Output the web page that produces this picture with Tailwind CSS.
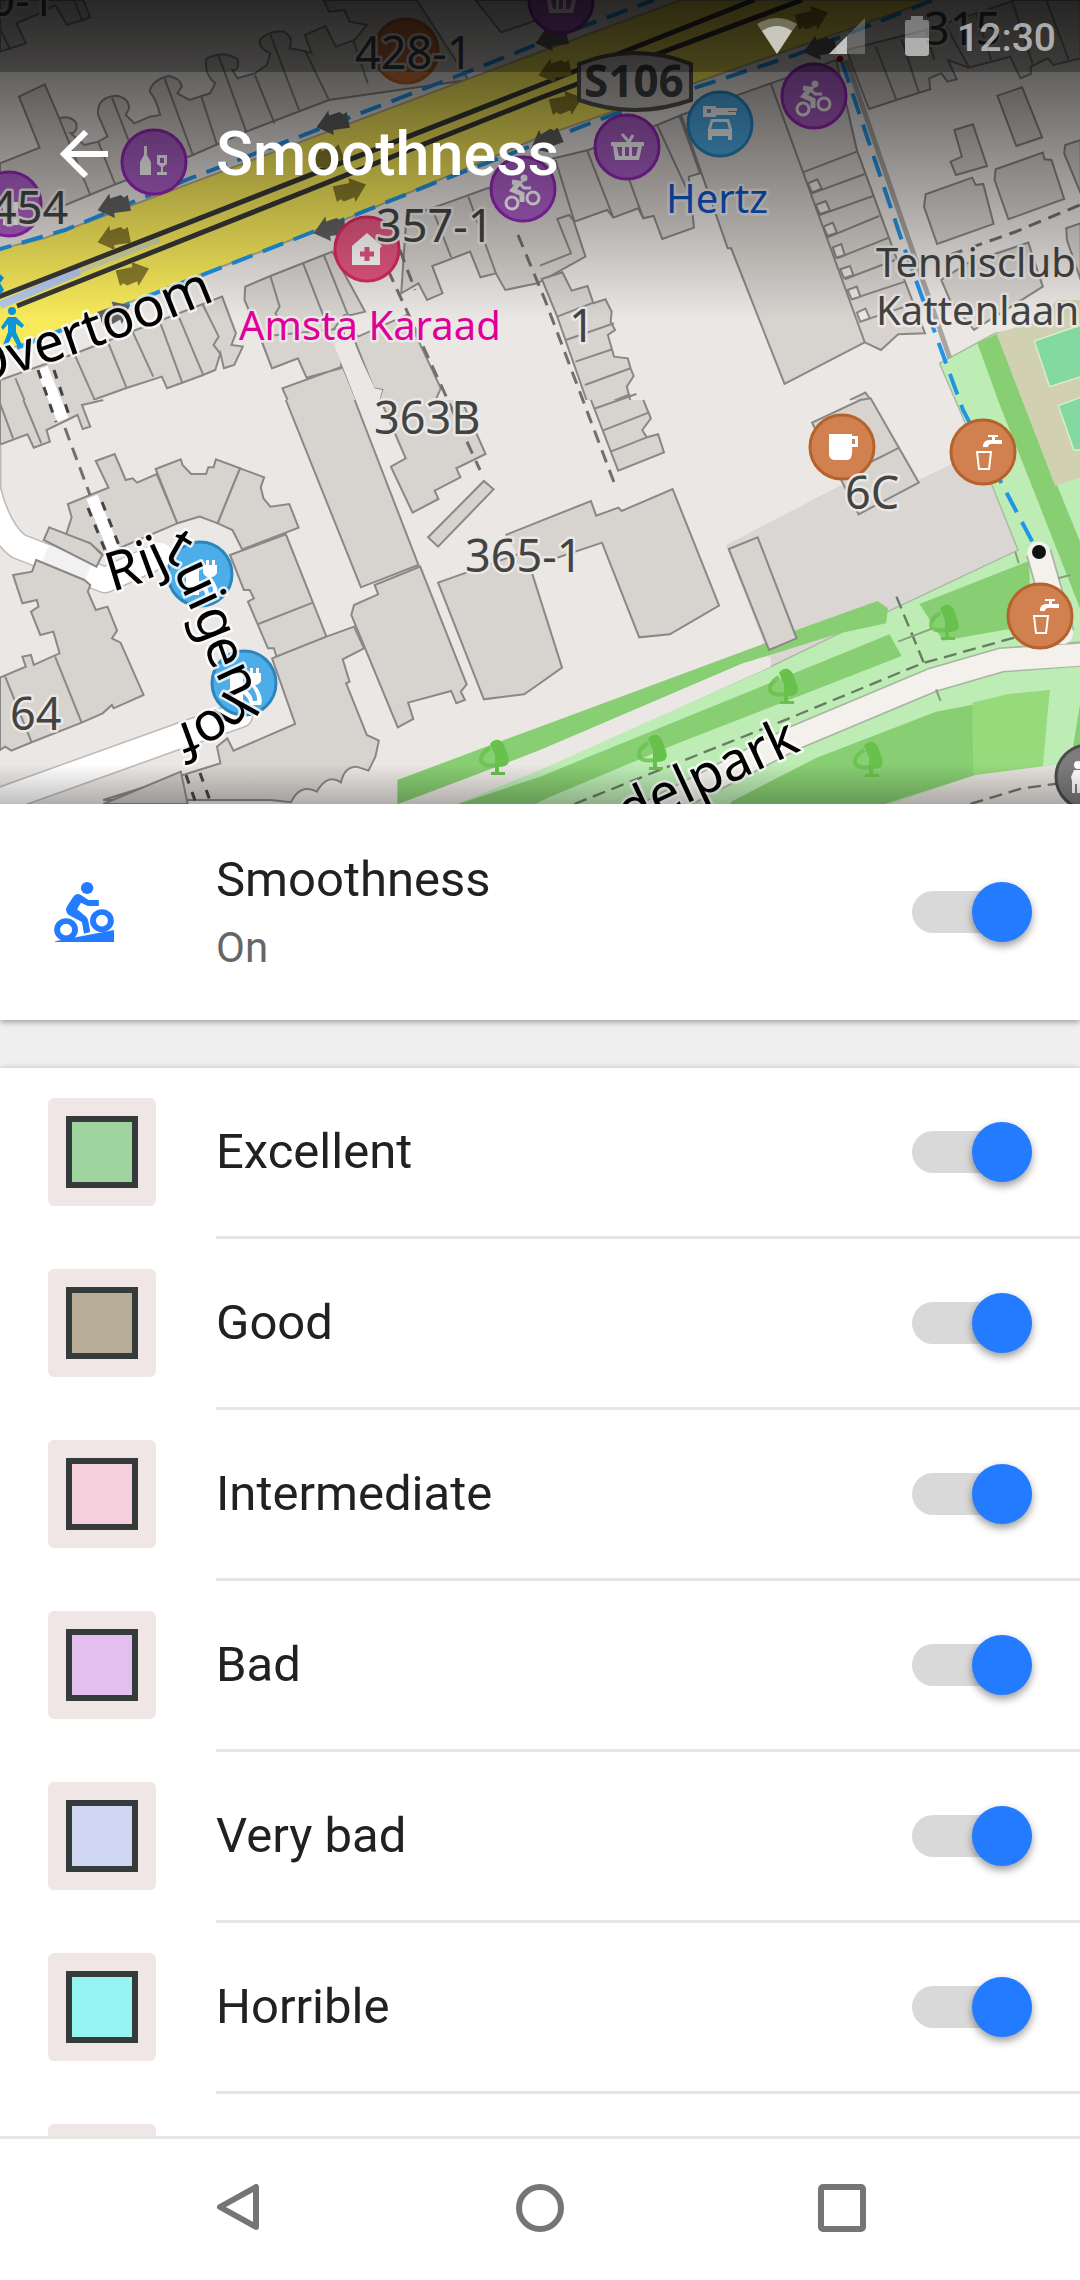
<!DOCTYPE html>
<html lang="en">
<head>
<meta charset="utf-8">
<meta name="viewport" content="width=device-width, initial-scale=1">
<title>Smoothness</title>
<script src="https://cdn.jsdelivr.net/npm/@tailwindcss/browser@4"></script>
</head>
<body class="flex h-screen flex-col overflow-hidden bg-white font-['Roboto',sans-serif] text-[#212121]">

<header class="relative h-[804px] shrink-0 overflow-hidden bg-[#ebe7e4]">
<svg class="absolute inset-0 size-full font-['Noto_Sans',sans-serif]" viewBox="0 0 1080 804" preserveAspectRatio="xMidYMin slice" role="img" aria-label="Map">
<defs>
  <path id="arrow" d="M-17 3L-3 -12V-7L8 -9L11 -6L15 -8L16 8L-1 8V13Z"/>
  <g id="bike" fill="none" stroke="#fff" stroke-width="3"><circle cx="-10" cy="11" r="6"/><circle cx="11" cy="6" r="6"/><path d="M-10 -10L-3 -9L-9 -2L0 2V10" stroke-width="5"/><path d="M-3 -9L2 -4H9"/><circle cx="2" cy="-14" r="2" fill="#fff"/></g>
  <g id="basket"><path d="M-16 -5H17V-1H15L12 13H-12L-14 -1H-16Z" fill="#fff"/><path d="M-10 0L-8 9H-5V0ZM-2 0V9H2V0ZM5 0V9H9L11 0Z" fill="#ac5fc8"/><path d="M-5 -13L2 -5L6 -12" fill="none" stroke="#fff" stroke-width="3"/></g>
  <g id="tap"><path d="M-1 -7Q0 -12 6 -12H8V-15H4V-17H14V-15H11V-12H18V-8H12Q4 -9 4 -5H-1Z" fill="#fff"/><path d="M-7 0H7L5 17H-5Z" fill="none" stroke="#fff" stroke-width="2"/></g>
  <g id="tree"><path fill="#67c14c" d="M-4 -13Q0 -18 5 -17Q11 -14 12 -6Q17 4 13 8Q10 10 5 10V15H11V18H-3V15H1V-2Z"/><path d="M-4 -9Q-14 -3 -13 4Q-10 10 2 8" fill="none" stroke="#67c14c" stroke-width="4" opacity=".8"/></g>
  <g id="plug"><path d="M3 -13H6V-18H9V-13H12V-18H15V-13H17V-5Q15 -1 11 -1Q20 10 17 19H6Q4 10 -1 8V17H-14V-12H-1V3Q7 5 9 15H13Q14 8 7 -1Q3 -3 3 -7Z" fill="#fff"/></g>
</defs>

<!-- parks -->
<g transform="translate(540 400) scale(.3444 .3333)">
  <path fill="#dad6d3" d="M540 435L870 258L1100 240L1200 190L1310 250L1388 450L1010 635L670 800L650 730Z"/>
  <path fill="#bdecb5" stroke="#a9b8a2" stroke-width="4" d="M-60 1130L670 800L880 695L1010 635L1388 450L1310 250L1160 -110L1320 -200L1570 -240V900L1568 1220H-420Z"/>
  <path fill="#88ce72" d="M-414 1220V1140L0 980L640 735L745 690L980 603L1010 625L1005 670L870 700L590 790L0 1050L-410 1215Z"/>
  <path fill="#ebe7e4" d="M-414 1213L0 1052L590 790L670 770V800L0 1110L-260 1220H-414Z"/>
  <path fill="#88ce72" d="M-260 1220L0 1130L1015 703L1050 768L400 1030L30 1190L-30 1220ZM1102 612L1420 483L1425 640L1400 680L1170 722ZM555 1205L800 1075L1150 935L1480 870L1455 1103L1265 1125L1000 1212H555ZM1270 -170L1330 -200L1400 0L1568 430V620L1330 0Z"/>
  <path fill="#96da7c" d="M1255 908L1360 882L1480 870L1460 1100L1258 1125Z"/>
  <path fill="#88ce72" d="M1540 1090L1570 900V1090Z"/>
  <path fill="#88ce72" d="M1330 0L1400 0L1570 430V630Z"/>
  <path fill="#d1d1b2" d="M1325 -200L1450 -240L1500 -300H1570V232L1496 258Z"/>
  <path fill="#84d9a0" stroke="#d8f0d0" stroke-width="4" d="M1435 -177L1570 -225V-70L1480 -40ZM1505 17L1570 -8V150L1550 150Z"/>
  <path fill="#e6e2de" d="M1010 1215L1265 1125L1570 1085V1220Z"/>
  <path fill="none" stroke="#a8b5a3" stroke-width="76" d="M240 1280L735 1015L1140 840L1340 780L1570 762M1448 458L1515 700"/>
  <path fill="none" stroke="#f4f1ec" stroke-width="66" stroke-linecap="round" d="M240 1280L735 1015L1140 840L1340 780L1600 762M1448 458L1515 700"/>
  <path fill="none" stroke="#6b7a66" stroke-width="7" stroke-dasharray="38 20" d="M100 1212L700 965L1110 790L1370 715L1420 705M1035 590L1115 790M1250 1212L1400 1165L1510 1150"/>
  <path fill="none" stroke="#87a17e" stroke-width="6" d="M1040 725L1140 685M1380 455L1390 490M1150 868L1163 903M1505 535L1540 525"/>
</g>
<use href="#tree" x="944" y="622"/><use href="#tree" x="783" y="686"/><use href="#tree" x="652" y="752"/><use href="#tree" x="868" y="759"/><use href="#tree" x="494" y="757"/>

<!-- side streets -->
<g fill="none" stroke-linecap="round" stroke-linejoin="round">
  <path stroke="#bdb9b6" stroke-width="27" d="M-12 445V490Q-2 530 18 546L105 580L150 560M-10 804L182 735L240 715"/>
  <path stroke="#fff" stroke-width="24" d="M-12 445V490Q-2 530 18 546L105 580L160 555M-10 804L182 735L240 715"/>
  <path stroke="#f1f1f1" stroke-width="22" stroke-linecap="butt" d="M45 555L88 573"/>
</g>

<!-- buildings, north west -->
<g class="*:[vector-effect:non-scaling-stroke]" transform="scale(.3444 .3333)" fill="#d7d3cf" stroke="#8a8886" stroke-width="2">
  <path d="M0 155L75 130L48 70L105 45L160 15L195 75L262 52L242 0H0ZM215 0L240 65M0 85L30 150"/>
  <path d="M0 490L115 443L55 290L130 253L172 355Q205 345 222 370Q225 400 205 400L245 435L285 425L312 410L285 345Q280 290 340 287Q375 295 375 325L365 345L390 370L435 350L465 345Q455 300 435 275Q440 240 490 228Q525 235 528 260L515 280L550 300L610 280L625 250Q590 220 600 175Q650 150 690 178Q695 215 675 210L690 235L740 220L775 195L785 160Q750 145 755 120Q780 90 825 95Q855 115 840 145L870 150L905 160L885 105L945 78L975 140L1030 120L1065 75L1015 65L1000 30L955 35L940 0H1210L1360 240L955 300L715 395L560 465L330 555L190 615L0 690Z"/>
  <path fill="none" d="M172 355L262 585M285 425L335 555M325 292L410 520M478 235L560 465M585 290L630 435M635 168L715 395M740 225L797 370M785 105L870 335M885 150L955 300M1025 120L1068 250"/>
  <path d="M1380 0L1455 97L1560 60V0Z"/>
  <path d="M0 1200V1140L220 1060L645 890L685 1000L672 1035L705 1040L680 1095L650 1105L640 1060L625 1110L590 1125L525 1150L485 1165L470 1130L365 1165L270 1200"/>
  <path fill="none" d="M45 1135L75 1210M130 1100L160 1200M217 1065L275 1200M315 1030L368 1165M385 995L445 1130M462 960L530 1150M515 940L590 1125M588 912L635 1010L620 1035L640 1062"/>
  <path d="M712 860L785 828L940 765L965 755L1060 935L1020 945L1000 945L905 1075L870 1073L790 1105L755 1010L710 900Z"/>
  <path fill="none" d="M785 828L812 920L800 940L870 1075M880 790L940 950M940 765L1010 945"/>
  <path d="M755 1010L1000 985L990 1105L890 1133L865 1075L790 1105ZM1100 1200L1110 1170L1085 1165L1010 970L1040 1010L1180 945L1280 1165L1265 1200M835 1200L820 1165L995 1100L1035 1200"/>
  <path fill="#ebe7e4" d="M968 1030L1018 1010L1088 1165L1110 1170L1100 1205H1035L995 1100Z" stroke="none"/>
  <path d="M1180 650L1300 608L1415 565L1630 550L1700 770L1560 850L1467 870L1440 820L1395 832L1365 755L1255 798L1285 880L1240 900L1215 850L1165 880Z"/>
  <path fill="none" d="M1262 645L1310 772M1360 590L1440 820"/>
</g>

<!-- buildings, north east -->
<g class="*:[vector-effect:non-scaling-stroke]" transform="translate(540 0) scale(.3444 .3333)" fill="#d7d3cf" stroke="#8a8886" stroke-width="2">
  <path d="M-40 495L140 450L340 375L410 345L465 520L432 530L447 683L355 717L330 648L300 655L285 625L213 653L195 630L100 665L85 645L50 657L90 760L0 797"/>
  <path fill="none" d="M45 480L100 665M137 452L213 653M242 490L300 655M340 375L432 580M405 348L465 520"/>
  <path d="M410 345L670 250L860 180L920 450L1060 845L1118 1000L1040 1003L990 1050L943 1027L710 1152L555 745L545 745Z"/>
  <path fill="none" d="M670 250L943 1027M763 517L920 455M790 580L943 522M812 645L967 588M835 712L985 648M862 775L1013 713M885 838L1030 780M905 898L1060 845M930 965L1060 920"/>
  <path fill="#ebe7e4" d="M778 550L805 538L818 565L790 578ZM800 615L830 603L842 632L813 642ZM823 680L850 668L862 698L835 708ZM850 742L875 732L885 765L860 773ZM872 808L900 798L910 825L883 835ZM893 870L920 860L930 890L905 898ZM920 938L945 926L958 955L930 965Z"/>
  <path d="M890 150L1120 90L1265 40L1380 0H1570V175L1490 195L1475 175L1425 200V222L1395 235L1365 170L1245 203L1185 180L1210 238L1183 245L1165 220L1130 235L1133 268L1035 300L955 327Z"/>
  <path fill="none" d="M975 140L1035 300M1050 118L1100 278M1120 90L1145 180M1180 80L1245 200M1265 35L1310 180M1370 0L1430 190M1470 0L1535 180"/>
  <path d="M1328 287L1400 262L1458 412L1383 438ZM1203 390L1257 373L1298 498L1208 525L1192 485L1225 470ZM1120 583L1255 533L1265 555L1287 552L1317 672L1153 732L1115 620ZM1323 508L1460 458L1465 478L1485 480L1522 597L1360 658L1320 540ZM1570 420L1525 435L1522 460L1570 580ZM1570 670L1528 685L1530 720L1570 840ZM1165 840L1190 900L1260 990L1460 860L1418 728L1240 790Z"/>
  <path d="M135 1200L50 950L5 837L65 817L92 872L138 858L155 910L190 898L208 935L205 965L218 990L197 1005L215 1070L255 1075L263 1105L272 1128L252 1160L262 1200"/>
  <path fill="none" d="M50 950L155 908M75 1020L215 970M103 1085L210 1048M130 1155L263 1105M185 1215L262 1183"/>
  <path d="M900 1200L945 1178L960 1200"/>
  <path fill="none" stroke="#aaa5a2" stroke-width="5" d="M890 180L1190 1075"/>
</g>

<!-- buildings, south west -->
<g class="*:[vector-effect:non-scaling-stroke]" transform="translate(0 400) scale(.3444 .3333)" fill="#d7d3cf" stroke="#8a8886" stroke-width="2">
  <path d="M300 0L238 15L262 80L240 87L225 45L135 90L145 125L98 143L80 103L5 132L0 130V0"/>
  <path fill="none" d="M0 10L38 115M68 0L120 130"/>
  <path d="M278 183L333 162L365 240L385 235L398 248L455 222L515 370L440 403L300 465L262 430L192 403L208 352L197 312L262 285L315 263Z"/>
  <path d="M452 207L525 178L530 195L555 222H598L605 202H620L627 178L697 205L632 370L580 350L515 370Z"/>
  <path d="M697 205L767 232L757 262L765 295L785 320L840 312L867 383L703 448L675 390L632 370Z"/>
  <path d="M143 382L262 430L297 465L280 500L127 420ZM105 480L245 540L262 555L255 575L278 630L312 620L340 692L325 715L350 728L417 885L330 925L325 915L298 940L237 968L92 1027L33 1052L15 1040L0 1050V833L75 800L65 770L90 765L98 795L173 760L155 695L117 705L90 635L112 620L107 600L65 610L38 525L93 515Z"/>
  <path fill="none" d="M160 770L237 968M15 830L92 1027"/>
  <path d="M668 465L830 403L948 710L803 770L795 745H778L720 605L737 595L725 570H708ZM750 672L908 608"/>
  <path d="M790 775L948 710L1028 680L1057 745L995 778L1015 845L1005 850L1065 1005L1100 1022L1090 1070L1070 1112L1035 1100Q1000 1100 990 1147Q950 1120 920 1175Q870 1150 845 1207L785 1200H300L640 1090L630 1040L660 1015L678 1052L857 972Z"/>
  <path d="M830 0L1048 562L1215 495L1030 0M1088 555L1220 500L1355 853L1338 875L1350 900L1325 910L1310 873L1185 908L1200 957L1155 982L1020 645L1028 615L1098 583Z"/>
  <path d="M1105 0L1178 175L1135 200L1198 338L1273 297L1262 272L1337 232L1325 205L1410 162L1340 0M1243 412L1405 243L1433 268L1272 440ZM1272 548L1525 455L1632 803L1568 850L1522 883L1405 898Z"/>
  <path fill="#cfcbc8" d="M300 1212L525 1115L545 1212Z"/>
</g>

<!-- buildings, south east -->
<g class="*:[vector-effect:non-scaling-stroke]" transform="translate(540 400) scale(.3444 .3333)" fill="#d7d3cf" stroke="#8a8886" stroke-width="2">
  <path d="M-100 405L148 303L163 347L228 323L237 333L385 267L520 617L377 703L288 712L180 428L-40 505"/>
  <path d="M148 0L227 212L360 157L343 103L310 112L297 90L322 55L300 0M155 27L280 -18M182 92L315 38M205 155L310 112M548 447L632 412L745 715L665 750Z"/>
  <path d="M790 68L930 0L960 -5L1100 248L925 343ZM885 225L1045 142"/>
</g>

<!-- footpaths -->
<g fill="none" stroke="#72706e" stroke-width="3" stroke-dasharray="13 8">
  <path d="M400 250L415 290M388 270L480 470M518 235L545 300L615 485M65 428L90 495M950 255L1015 232L1080 205"/>
</g>
<g fill="none"><path stroke="#fff" stroke-width="12" d="M42 368L63 420M92 497L114 550"/><path stroke="#444" stroke-width="3" stroke-dasharray="9 9" d="M38 370L56 422M54 370L70 418M88 508L105 550M102 502L120 548M186 775L197 806M200 773L212 806"/></g>

<!-- main road -->
<path fill="#f8ea5b" stroke="#b7ae86" stroke-width="2" d="M-4 250L45 238L540 52L681 0H932L540 137L361 213L213 270L-4 354Z"/>
<path fill="none" stroke="#b5c9eb" stroke-width="8" d="M0 305L80 271"/>
<path fill="none" stroke="#d5d9ae" stroke-width="5" d="M80 271L160 240"/>
<path fill="none" stroke="#383838" stroke-width="5" d="M-4 298L540 85L754 0M17 306L540 98L802 0"/>
<g fill="none" stroke="#2196e8" stroke-width="4" stroke-dasharray="22 11">
  <path d="M-10 252L65 230L191 178L356 115L465 73L560 35L654 0M17 348L138 300L305 235L437 182L612 115L795 55L933 0M842 62L905 250L963 410L1033 543"/>
</g>
<g fill="#616161">
  <use href="#arrow" transform="translate(333 122) rotate(-8)"/><use href="#arrow" transform="translate(114 205) rotate(-8)"/><use href="#arrow" transform="translate(330 228) rotate(-8)"/><use href="#arrow" transform="translate(820 47) rotate(-8)"/><use href="#arrow" transform="translate(552 38) rotate(-8)"/><use href="#arrow" transform="translate(115 314) rotate(160)"/><use href="#arrow" transform="translate(546 140) rotate(-20)"/>
</g>
<g fill="#8b7e2c">
  <use href="#arrow" transform="translate(114 237) rotate(-8)"/><use href="#arrow" transform="translate(133 275) rotate(168)"/><use href="#arrow" transform="translate(327 157) rotate(-20)"/><use href="#arrow" transform="translate(350 191) rotate(168)"/><use href="#arrow" transform="translate(566 104) rotate(168)"/><use href="#arrow" transform="translate(812 19) rotate(168)"/><use href="#arrow" transform="translate(555 70) rotate(-8)"/>
</g>
<circle cx="840" cy="59" r="3" fill="#c00" stroke="#c00"/>
<circle cx="1039" cy="552" r="7" fill="#111"/>
<path fill="#0b96dc" d="M12 307A4 4 0 0 1 12 315A4 4 0 0 1 12 307ZM8 317H16L24 325L22 328L16 324V332L22 345L18 347L12 336L7 347L3 345L8 332V324L3 330L1 327ZM-2 272L4 278L0 283L4 290L-2 297Z"/>

<!-- points of interest -->
<g stroke-width="3">
  <g fill="#ac5fc8" stroke="#9528b5"><circle cx="154" cy="162" r="32"/><circle cx="9" cy="204" r="32"/><circle cx="523" cy="189" r="32"/><circle cx="561" cy="1" r="32"/><circle cx="627" cy="147" r="32"/><circle cx="814" cy="96" r="32"/></g>
  <circle cx="406" cy="51" r="32" fill="#c76f3c" stroke="#b5602d"/>
  <circle cx="367" cy="249" r="32" fill="#e3567f" stroke="#d92a66"/>
  <g fill="#4dade9" stroke="#2b86bf"><circle cx="720" cy="124" r="32"/><circle cx="200" cy="574" r="32"/><circle cx="244" cy="683" r="32"/></g>
  <g fill="#d0814f" stroke="#b5622c"><circle cx="842" cy="447" r="32"/><circle cx="983" cy="452" r="32"/><circle cx="1040" cy="616" r="32"/></g>
  <circle cx="1088" cy="777" r="32" fill="#7c7c7c" stroke="#4c4c4c"/>
</g>
<g fill="#fff"><path d="M144 146H147V155L151 162V175H140V162L144 155ZM157 155H167V164L163 167V172H167V175H157V172H161V167L157 164ZM160 158V163H164V158Z" fill-rule="evenodd"/><path d="M3 202H18V225H3Z"/><path d="M352 246L367 233L382 246L380 248V265H352Z"/><path d="M829 434H852V436H858V447H852Q853 460 847 460H834Q829 459 829 454ZM852 439V444H855V439Z" fill-rule="evenodd"/><path d="M703 106H716V108H737V111H728V112H736V115H716V117H703ZM707 109V113H711V109ZM711 119H729L732 129V140H728V136H712V140H708V129ZM713 122L711 129H729L727 122Z" fill-rule="evenodd"/><path d="M1078 761A4 4 0 0 1 1078 769A4 4 0 0 1 1078 761ZM1071 777L1074 770H1080V793H1077V784H1075V793H1072V781Z"/></g>
<path d="M367 247V261M360 254H374" stroke="#e3567f" stroke-width="5"/>
<use href="#bike" x="522" y="192"/><use href="#bike" x="813" y="98"/><use href="#basket" x="627" y="147"/><use href="#basket" x="561" y="0"/><use href="#tap" x="984" y="452"/><use href="#tap" x="1041" y="616"/><use href="#plug" x="200" y="578"/><use href="#plug" x="244" y="686"/>
<path fill="#cfcbc8" stroke="#58544b" stroke-width="4" d="M579 64Q635 42 691 64V100Q635 120 579 100Z"/>

<!-- labels -->
<g fill="#424444" stroke="#ebe7e4" stroke-width="5" stroke-linejoin="round" paint-order="stroke" font-size="45">
  <text x="-62" y="16">420-1</text><text x="355" y="69">428-1</text><text x="-9" y="224">454</text><text x="376" y="242">357-1</text><text x="924" y="45">315</text><text x="569" y="342">1</text><text x="374" y="434">363B</text><text x="465" y="572">365-1</text><text x="10" y="730">64</text><text x="845" y="509">6C</text>
  <g font-size="40"><text x="876" y="277">Tennisclub</text><text x="876" y="325">Kattenlaan</text><text x="239" y="340" fill="#df009a">Amsta Karaad</text><text x="666" y="213" fill="#0f55c6">Hertz</text></g>
  <text x="584" y="97" font-size="44" class="font-bold" stroke="none">S106</text>
</g>
<g fill="#000" stroke="#fff" stroke-opacity=".8" stroke-width="5" stroke-linejoin="round" paint-order="stroke" font-size="54">
  <path id="overtoom" d="M-60 394Q60 365 216 300" fill="none" stroke="none"/>
  <text text-anchor="end"><textPath href="#overtoom" startOffset="100%">Overtoom</textPath></text>
  <text x="802" y="750" text-anchor="end" transform="rotate(-25 802 750)">Vondelpark</text>
  <text x="112 145 158 162 173 187 193 203 215 226 217 191" y="592 580 574 558 570 601 614 643 672 688 705 720" rotate="-17 -20 -25 30 65 65 68 70 65 119 150 160">Rijtuigenhof</text>
</g>
</svg>

<div class="absolute inset-0 bg-linear-to-b from-black/75 to-transparent to-[320px]"></div>
<div class="absolute inset-x-0 bottom-0 h-10 bg-linear-to-t from-black/25 to-transparent"></div>

<div class="relative flex h-18 items-center justify-end bg-black/30 pr-6 text-white/60">
  <svg class="mr-8 h-9 w-10" viewBox="0 0 40 36" fill="currentColor" aria-hidden="true"><path opacity=".5" d="M0 6Q20 -6 40 6L20 36Z"/><path d="M5 13Q20 3 35 13L20 36Z"/></svg>
  <svg class="mr-10 size-9" viewBox="0 0 36 36" fill="currentColor" aria-hidden="true"><path opacity=".4" d="M0 36L36 0V36Z"/><path d="M0 36L18 18V36Z"/></svg>
  <svg class="mr-7 h-10 w-6" viewBox="0 0 24 40" fill="currentColor" aria-hidden="true"><path opacity=".6" d="M0 22V6Q0 4 2 4H6V0H18V4H22Q24 4 24 6V22Z"/><path d="M0 22H24V37Q24 40 21 40H3Q0 40 0 37Z"/></svg>
  <time class="pt-1 text-[39px] leading-none font-medium">12:30</time>
</div>
<div class="relative flex h-[164px] items-center text-white">
  <button type="button" aria-label="Back" class="flex w-54 pl-15"><svg class="h-12 w-12" viewBox="0 0 48 48" fill="none" stroke="currentColor" stroke-width="6" aria-hidden="true"><path d="M48 24H5M26 2L4 24L26 46"/></svg></button>
  <h1 class="text-[61px] leading-none font-medium">Smoothness</h1>
</div>
</header>

<main class="flex min-h-0 flex-1 flex-col overflow-hidden bg-[#efefef]">
<label class="flex h-54 shrink-0 items-center bg-white pr-12 shadow-[0_2px_6px_rgb(0_0_0/0.35)]">
  <span class="w-54 shrink-0 pl-[54px]">
    <svg class="size-15" viewBox="157 246 174 180" preserveAspectRatio="none" aria-hidden="true"><g fill="#237bff"><circle cx="253" cy="264" r="18"/><path d="M192 331Q191 325 195 319L213 290Q222 276 236 286L257 300H287V318H255L235 308L224 328L250 350Q256 356 257 366L262 396L244 401L238 366L200 345Q193 340 192 331Z"/><path d="M160 424L220 412L331 390V426H160Z"/></g><g fill="none" stroke="#237bff" stroke-width="17"><circle cx="192" cy="389" r="26"/><circle cx="296" cy="362" r="26"/></g></svg>
  </span>
  <span class="flex flex-1 flex-col pt-1">
    <span class="text-[49px] leading-[68px]">Smoothness</span>
    <span class="text-[42px] leading-[68px] text-[#666]">On</span>
  </span>
  <input type="checkbox" role="switch" checked class="flex h-[42px] w-30 appearance-none items-center justify-end rounded-full bg-[#d9d9d9] after:size-15 after:shrink-0 after:rounded-full after:bg-[#237bff] after:shadow-[0_4px_8px_rgb(0_0_0/0.4)] after:content-['']">
</label>

<ul id="levels" class="mt-12 flex-1 overflow-hidden bg-white shadow-[0_0_6px_rgb(0_0_0/0.2)]"></ul>
</main>

<nav class="grid h-36 shrink-0 grid-cols-[1fr_302px_302px_302px_1fr] items-center border-t-[3px] border-[#e6e6e6] bg-white pb-1 text-[#757575]" aria-label="System">
  <button type="button" aria-label="Back" class="col-start-2 flex justify-center"><svg class="size-12" viewBox="0 0 48 48" fill="none" stroke="currentColor" stroke-width="6" stroke-linejoin="round" aria-hidden="true"><path d="M42 3V43L6 23Z"/></svg></button>
  <button type="button" aria-label="Home" class="col-start-3 flex justify-center"><svg class="size-12" viewBox="0 0 48 48" fill="none" stroke="currentColor" stroke-width="6" aria-hidden="true"><circle cx="24" cy="24" r="21"/></svg></button>
  <button type="button" aria-label="Recent apps" class="col-start-4 flex justify-center"><svg class="size-12" viewBox="0 0 48 48" fill="none" stroke="currentColor" stroke-width="6" aria-hidden="true"><rect x="3" y="3" width="42" height="42" rx="2"/></svg></button>
</nav>

<template id="level">
<li>
  <label class="flex h-[171px] items-center">
    <span class="flex h-full w-54 shrink-0 items-center pb-[3px] pl-12"><span class="flex size-27 items-center justify-center rounded-md bg-[#efe6e5]"><i class="size-18 border-6 border-[#353b3b]"></i></span></span>
    <span class="flex h-full flex-1 items-center border-b-3 border-[#e6e6e6] pr-12">
      <b class="flex-1 text-[49px] leading-[68px] font-normal"></b>
      <input type="checkbox" role="switch" checked class="flex h-[42px] w-30 appearance-none items-center justify-end rounded-full bg-[#d9d9d9] after:size-15 after:shrink-0 after:rounded-full after:bg-[#237bff] after:shadow-[0_4px_8px_rgb(0_0_0/0.4)] after:content-['']">
    </span>
  </label>
</li>
</template>
<script>
const levels = [["Excellent", "#9fd49f"], ["Good", "#b7ad96"], ["Intermediate", "#f5cfdc"], ["Bad", "#e2bfee"], ["Very bad", "#cfd6f1"], ["Horrible", "#94f4f1"], ["Very horrible", "#f0b090"]];
for (const [name, color] of levels) {
  const row = document.getElementById("level").content.cloneNode(true);
  row.querySelector("b").textContent = name;
  row.querySelector("i").style.backgroundColor = color;
  document.getElementById("levels").append(row);
}
</script>
</body>
</html>
